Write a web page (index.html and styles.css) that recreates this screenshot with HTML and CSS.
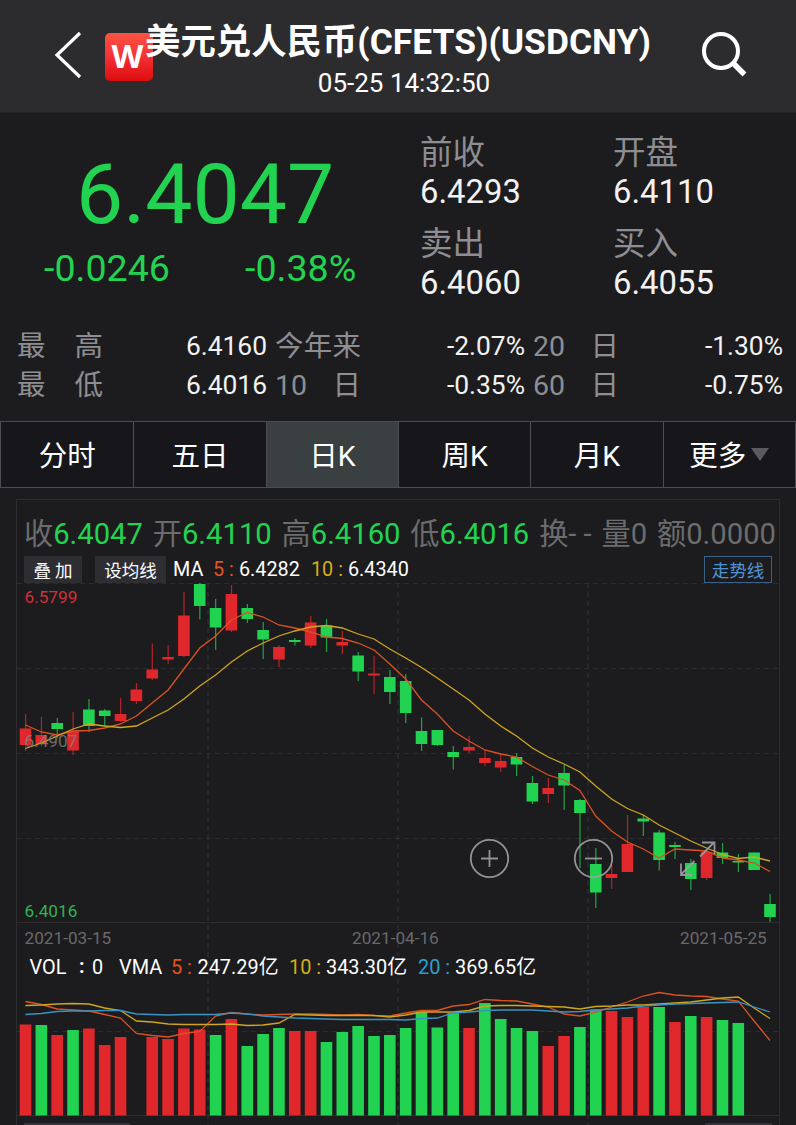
FILE: index.html
```html
<!DOCTYPE html>
<html lang="zh-CN">
<head>
    <meta charset="UTF-8">
    <meta name="viewport" content="width=device-width, initial-scale=1.0">
    <title>美元兑人民币</title>
    <link rel="stylesheet" href="styles.css">
</head>
<body>
    <header class="header">
        <svg class="back" width="30" height="50" viewBox="0 0 30 50">
            <path d="M26 4 L3 26 L26 48" fill="none" stroke="#fff" stroke-width="3.2"/>
        </svg>
        <div class="logo">W</div>
        <div class="title">
            <h1>美元兑人民币(CFETS)(USDCNY)</h1>
            <p>05-25 14:32:50</p>
        </div>
        <svg class="search" width="48" height="48" viewBox="0 0 48 48">
            <circle cx="20" cy="20" r="17" fill="none" stroke="#fff" stroke-width="4"/>
            <path d="M32 32 L43.500 43.500" stroke="#fff" stroke-width="5.5"/>
        </svg>
    </header>

    <section class="quote">
        <div class="last">
            <div class="price">6.4047</div>
            <div class="change"><span>-0.0246</span><span>-0.38%</span></div>
        </div>
        <dl class="stats">
            <div><dt>前收</dt><dd>6.4293</dd></div>
            <div><dt>开盘</dt><dd>6.4110</dd></div>
            <div><dt>卖出</dt><dd>6.4060</dd></div>
            <div><dt>买入</dt><dd>6.4055</dd></div>
        </dl>
    </section>

    <section class="ranges">
        <div class="range"><span class="name"><i>最</i><i>高</i></span><b>6.4160</b></div>
        <div class="range"><span class="name"><i>今</i><i>年</i><i>来</i></span><b>-2.07%</b></div>
        <div class="range"><span class="name"><i>20</i><i>日</i></span><b>-1.30%</b></div>
        <div class="range"><span class="name"><i>最</i><i>低</i></span><b>6.4016</b></div>
        <div class="range"><span class="name"><i>10</i><i>日</i></span><b>-0.35%</b></div>
        <div class="range"><span class="name"><i>60</i><i>日</i></span><b>-0.75%</b></div>
    </section>

    <nav class="tabs">
        <a>分时</a>
        <a>五日</a>
        <a class="active">日K</a>
        <a>周K</a>
        <a>月K</a>
        <a>更多<span class="arrow"></span></a>
    </nav>

    <main class="panel">
        <div class="ohlc">
            <span>收<b>6.4047</b></span>
            <span>开<b>6.4110</b></span>
            <span>高<b>6.4160</b></span>
            <span>低<b>6.4016</b></span>
            <span>换- -</span>
            <span>量0</span>
            <span>额0.0000</span>
        </div>
        <div class="legend">
            <button class="btn overlay">叠 加</button>
            <button class="btn setma">设均线</button>
            <span class="ma">MA</span>
            <span class="ma5">5 :</span>
            <span class="val">6.4282</span>
            <span class="ma10">10 :</span>
            <span class="val">6.4340</span>
            <button class="trend">走势线</button>
        </div>
        <svg class="chart" id="chart" width="762" height="542" viewBox="17 583 762 542">
            <g class="grid">
                <path class="dash" d="M17 583.5H779M17 668.5H779M17 753.5H779M17 838.5H779M17 1031.5H779"/>
                <path class="dash vertical" d="M208 583V1125M398 583V1125M588 583V1125"/>
                <path d="M17 922.5H779M17 1115.5H779"/>
            </g>
            <g id="candles"></g>
            <g id="volumes"></g>
            <g id="lines"></g>
            <g class="scale">
                <text class="high" x="24.5" y="603">6.5799</text>
                <text class="mid" x="24.5" y="746.5">6.4907</text>
                <text class="low" x="24.5" y="916.5">6.4016</text>
                <text class="date" x="24.5" y="943.5">2021-03-15</text>
                <text class="date" x="352" y="943.5">2021-04-16</text>
                <text class="date" x="680" y="943.5">2021-05-25</text>
            </g>
            <g class="vol">
                <text x="29.5" y="974">VOL</text>
                <text x="79" y="973" class="colon">:</text>
                <text x="92" y="974">0</text>
                <text x="119" y="974">VMA</text>
                <text x="171" y="974" class="c5">5 :</text>
                <text x="197.5" y="974">247.29亿</text>
                <text x="289" y="974" class="c10">10 :</text>
                <text x="326" y="974">343.30亿</text>
                <text x="418" y="974" class="c20">20 :</text>
                <text x="455" y="974">369.65亿</text>
            </g>
            <g class="tools">
                <circle cx="489.5" cy="858.5" r="18.7"/>
                <path d="M481 858.5h17M489.5 850v17"/>
                <circle cx="593.5" cy="858.5" r="18.7"/>
                <path d="M585 858.5h17"/>
                <path d="M700 856.5L714 842.5M702 842.5h12.500v11.500M694.500 861L681 874.500M681 863.500v11.500h11.500"/>
            </g>
            <path class="next" d="M24 1123h106v2H24zM705 1123h67v2H705z"/>
        </svg>
    </main>
    <script src="chart.js"></script>
</body>
</html>
```

FILE: styles.css
```css
* {
    box-sizing: border-box;
}
body {
    margin: 0;
    height: 1125px;
    overflow: hidden;
    background: #1c1c1e;
    color: #fff;
    font-family: Roboto, "Noto Sans CJK SC", sans-serif;
}
h1, p, dl, dd {
    margin: 0;
}
i, b {
    font-style: normal;
    font-weight: normal;
}

/* header */
.header {
    display: flex;
    height: 113px;
    background: #2c2c2e;
    border-bottom: 1px solid #232325;
}
.back {
    margin: 29px 0 0 54px;
}
.logo {
    width: 48px;
    height: 48px;
    margin: 33px 0 0 21px;
    padding-right: 3px;
    border-radius: 5px;
    background: linear-gradient(#fb5440, #f5333a 45%, #dd0d0d);
    font: bold 33px/45px "Open Sans", sans-serif;
    text-align: center;
}
.title {
    width: 505px;
    margin-left: -8px;
    padding-top: 16px;
    text-align: center;
    white-space: nowrap;
}
.title h1 {
    font-size: 35.4px;
    line-height: 52px;
}
.title p {
    padding-left: 13px;
    font-size: 26px;
    line-height: 31px;
}
.search {
    margin: 31px 0 0 51px;
}

/* last price */
.quote {
    display: flex;
    height: 214px;
}
.last {
    width: 420px;
    color: #22d351;
}
.price {
    padding: 32px 0 0 76px;
    font-size: 84px;
    line-height: 100px;
}
.change {
    display: flex;
    padding-left: 44px;
    font-size: 37.6px;
    line-height: 46px;
}
.change span:first-child {
    width: 201px;
}
.stats {
    display: grid;
    grid-template-columns: 193px 183px;
    grid-auto-rows: 91px;
    padding-top: 20px;
}
.stats dt {
    color: #8e8e92;
    font-size: 32.5px;
    line-height: 40px;
}
.stats dd {
    color: #f2f2f2;
    font-size: 32.8px;
    line-height: 38px;
}

/* high / low / performance */
.ranges {
    display: grid;
    grid-template-columns: 250px 258px 258px;
    grid-auto-rows: 39px;
    height: 94px;
    padding-left: 17px;
    line-height: 39px;
}
.range {
    display: flex;
    justify-content: space-between;
}
.range + .range {
    padding-left: 8px;
}
.range:nth-child(4) {
    padding-left: 0;
}
.name {
    display: flex;
    justify-content: space-between;
    width: 86px;
    color: #8e8e92;
    font-size: 28.5px;
}
.range b {
    color: #f2f2f2;
    font-size: 26.4px;
}

/* period tabs */
.tabs {
    display: grid;
    grid-template-columns: repeat(6, 1fr);
    height: 67px;
    border: 1px solid #4b4d50;
    background: #17171b;
}
.tabs a {
    display: flex;
    align-items: center;
    justify-content: center;
    padding-bottom: 3px;
    font-size: 28.5px;
}
.tabs a + a {
    border-left: 1px solid #4b4d50;
}
.tabs .active {
    background: #3a3f42;
}
.arrow {
    margin: 2px 0 0 5px;
    border: 9px solid transparent;
    border-top: 13px solid #5b5b5e;
    border-bottom: 0;
}

/* chart */
.panel {
    width: 764px;
    height: 640px;
    margin: 11px 0 0 16px;
    border: 1px solid #2d2d2f;
}
.ohlc {
    display: flex;
    justify-content: space-between;
    height: 56px;
    padding: 12px 3px 0 7px;
    color: #6c6c6f;
    font-size: 29.2px;
    line-height: 44px;
    white-space: nowrap;
}
.ohlc b {
    color: #22d351;
}
.legend {
    display: flex;
    height: 27px;
    padding: 0 7px;
    font-size: 19.8px;
    line-height: 27px;
}
.legend button {
    height: 27px;
    padding: 0;
    border: 0;
    color: #fff;
    font: 17.5px/27px "Noto Sans CJK SC", sans-serif;
}
.btn.overlay {
    width: 58px;
    margin-right: 13px;
    background: #2e2e32;
}
.btn.setma {
    width: 71px;
    background: #2e2e32;
}
.ma {
    width: 40px;
    margin-left: 7px;
}
.ma5 {
    width: 26px;
    color: #e0541e;
}
.ma10 {
    width: 37px;
    color: #d9ad16;
}
.legend .val {
    width: 72px;
}
.legend .trend {
    width: 68px;
    margin-left: auto;
    border: 1px solid #3a6289;
    background: none;
    color: #4f93d3;
    line-height: 25px;
}
.chart {
    display: block;
}
.grid path {
    fill: none;
    stroke: #2d2d2f;
}
.grid .dash {
    stroke: #2c2c2e;
    stroke-dasharray: 5 4;
}
.grid .vertical {
    stroke: #343436;
}
.up {
    fill: #e0282c;
}
.down {
    fill: #22d351;
}
.wick {
    opacity: 0.75;
}
.line {
    fill: none;
    stroke-width: 1.3;
}
.line.orange {
    stroke: #db5222;
}
.line.yellow {
    stroke: #cfa521;
}
.line.blue {
    stroke: #3b93c4;
}
.scale {
    font-size: 17.2px;
}
.high {
    fill: #d32e39;
}
.mid {
    fill: #85807a;
    opacity: 0.8;
}
.low {
    fill: #2fb455;
}
.date {
    fill: #69696c;
}
.vol {
    fill: #fff;
    font-size: 19.9px;
}
.colon {
    font-weight: bold;
}
.c5 {
    fill: #e0541e;
}
.c10 {
    fill: #d9ad16;
}
.c20 {
    fill: #2b9fd0;
}
.tools {
    fill: none;
    stroke: #a0a0a5;
    stroke-width: 1.8;
    opacity: 0.9;
}
.next {
    fill: #333337;
}
```

FILE: chart.js
```js
const NS = "http://www.w3.org/2000/svg";
const X0 = 25.5;
const STEP = 15.84;
const BASE = 1115;

// high, body top, body bottom, low, u = up / d = down
const candles = [
    [714, 728.5, 745, 751, "u"], [717, 735, 744, 746, "u"], [718, 723, 729, 738, "d"], [712, 731, 750.5, 755, "u"],
    [699, 709.5, 726, 732, "d"], [709, 710.5, 716, 727, "d"], [698, 714, 721, 722, "u"], [683, 689.5, 701, 704, "u"],
    [643.5, 669.5, 678.5, 680, "u"], [645, 657, 659.5, 664, "u"], [592, 615.5, 656, 657, "u"], [583, 584, 606, 619.5, "d"],
    [599, 608, 627.5, 650, "d"], [585, 594, 630.5, 632, "u"], [604, 608, 619, 623, "d"], [622, 630, 639.5, 659, "d"],
    [645, 647, 659.5, 667, "u"], [638, 640, 642, 645.5, "d"], [616, 622.5, 645.5, 648, "u"], [619, 625.5, 637.5, 652, "d"],
    [631, 642, 645.5, 654, "u"], [652, 655.5, 671.5, 681, "d"], [656, 673.5, 675.5, 694, "u"], [670, 677, 692, 704, "d"],
    [674, 681, 713, 723, "d"], [717.5, 731, 744, 751, "d"], [730, 730, 745, 746, "d"], [746, 752, 757, 769.5, "d"],
    [736, 747, 750.5, 753, "u"], [750, 758, 763, 766, "u"], [753, 761, 767.5, 772, "u"], [753, 757, 764.5, 776, "d"],
    [776, 783, 801.5, 804, "d"], [778, 788, 794, 803, "u"], [765, 773, 785.5, 810, "d"], [799, 800, 813, 868, "d"],
    [848, 864, 892.5, 908, "d"], [864, 874, 878, 889, "u"], [815, 844, 872, 872, "u"], [815, 818.5, 821.5, 836, "d"],
    [830, 832.5, 860, 870.5, "d"], [842, 845, 847, 859, "d"], [859, 863, 879, 890, "d"], [851, 852, 878, 880, "u"],
    [843, 852.5, 858, 864, "d"], [854, 861, 862.5, 872, "d"], [852.5, 852.5, 870, 870, "d"], [894, 904, 917, 922, "d"]
];

const volumes = [
    1024.5, 1025, 1035, 1030, 1028.5, 1045, 1037, null, 1037, 1039, 1028.5, 1029.5,
    1035, 1019, 1046, 1034, 1028, 1031, 1031, 1042, 1032, 1026, 1036, 1035,
    1028, 1012, 1027.5, 1013, 1028, 1003, 1019, 1028, 1031, 1046, 1036, 1027,
    1009.5, 1011, 1017, 1007, 1007, 1022, 1016, 1017, 1020, 1023
];
const upVolumes = [0, 2, 4, 5, 6, 8, 9, 10, 11, 13, 17, 18, 28, 33, 34, 37, 38, 39, 41, 43];

const lines = {
    orange: [
        [725, 732, 735, 731, 730.5, 728, 724, 716, 703, 690, 669, 648, 636, 620, 612.5, 617, 625, 628, 632, 637, 638.5, 643, 650, 664,
            679, 700, 714, 731, 741, 750, 754, 757, 766.5, 775, 780, 790.5, 816, 831, 842, 849, 858, 849, 850, 851, 858, 860, 863, 871.5],
        [1001.5, 1004.5, 1009, 1010, 1011, 1014.5, 1018, 1033.5, 1035.5, 1037, 1033.5, 1031.5, 1016, 1012.5, 1014, 1015, 1014.5, 1014, 1014, 1014.5, 1015, 1014.5, 1015.5, 1016,
            1013, 1010.5, 1010.5, 1006, 1004.5, 999.5, 1000.5, 1001, 1004, 1007, 1014, 1016, 1012, 1007, 1002, 996, 992.5, 995, 996, 996.5, 999, 1001, 1021, 1040.5]
    ],
    yellow: [
        [748.5, 743, 736, 729, 724, 726, 727.5, 726, 718, 710, 699, 686, 675, 662, 651, 643, 636, 631, 627, 625.5, 628, 634, 639, 649,
            658, 667.5, 678, 689, 700, 714, 726, 736, 748, 757, 764, 772, 786, 799, 808.5, 815, 825, 833, 841, 848, 854.5, 858.5, 857, 861],
        [1005.5, 1005, 1004, 1003.5, 1004, 1008, 1010.5, 1021, 1022, 1024, 1024.5, 1024.5, 1024.5, 1024, 1025.5, 1025, 1023, 1014.5, 1015, 1015.5, 1015.5, 1015.5, 1015.5, 1017,
            1015, 1012, 1012, 1012, 1010.5, 1006, 1005.5, 1005.5, 1006, 1006.5, 1007, 1009, 1006.5, 1006, 1005, 1005, 1004, 1003, 1002, 1000, 998, 997, 1008, 1018.5]
    ],
    blue: [
        [1014.5, 1013.5, 1011.5, 1011, 1011, 1010.5, 1010.5, 1014, 1014.5, 1015, 1014.5, 1014.5, 1014.5, 1013, 1014, 1016, 1017, 1018, 1018.5, 1019, 1019.5, 1019.5, 1019.5, 1019.5,
            1020, 1018.5, 1018, 1013, 1012, 1010.5, 1010, 1010, 1010, 1011, 1012, 1011.5, 1010, 1009, 1008, 1006, 1005, 1004, 1003.5, 1003, 1002.5, 1002, 1007, 1012]
    ]
};

function add(parent, tag, attrs) {
    const el = document.createElementNS(NS, tag);
    for (const key in attrs) {
        el.setAttribute(key, attrs[key]);
    }
    document.getElementById(parent).appendChild(el);
}

candles.forEach(function([high, top, bottom, low, side], i) {
    const x = X0 + i * STEP;
    const cls = side === "u" ? "up" : "down";
    add("candles", "rect", { class: cls + " wick", x: x - 0.5, y: high, width: 1.2, height: low - high });
    add("candles", "rect", { class: cls, x: x - 5.8, y: top, width: 11.6, height: bottom - top });
});

volumes.forEach(function(top, i) {
    if (top === null) return;
    const cls = upVolumes.includes(i) ? "up" : "down";
    add("volumes", "rect", { class: cls, x: X0 + i * STEP - 5.8, y: top, width: 11.6, height: BASE - top + 0.5 });
});

for (const color in lines) {
    lines[color].forEach(function(values) {
        const points = values.map((y, i) => (X0 + i * STEP).toFixed(1) + "," + y).join(" ");
        add("lines", "polyline", { class: "line " + color, points: points });
    });
}
```
